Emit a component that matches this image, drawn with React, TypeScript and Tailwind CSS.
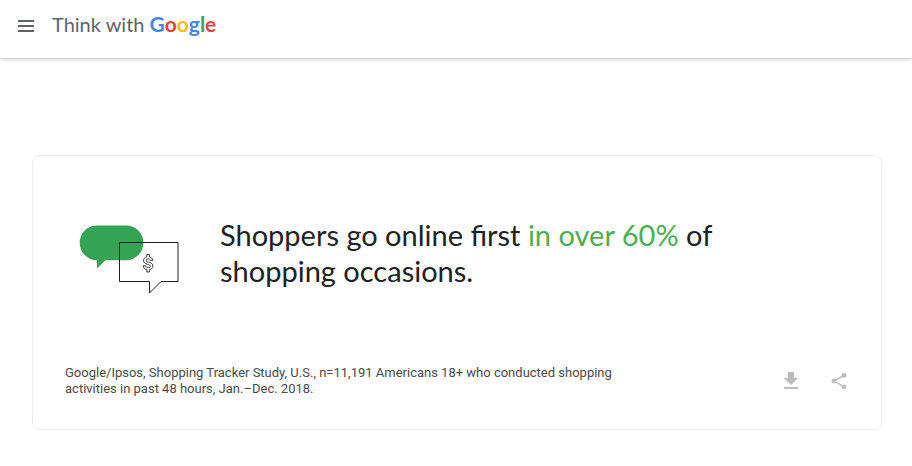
import React from "react";
import { MdFileDownload, MdShare } from "react-icons/md";

function Header() {
  return (
    <header className="flex h-[58px] items-center gap-[18px] bg-white px-[18px] pb-1.5 shadow-[0_1px_4px_rgba(0,0,0,0.25)]">
      <button type="button" aria-label="Open menu" className="text-[#5f6368]">
        <svg width="16" height="12" viewBox="0 0 16 12" fill="currentColor" aria-hidden="true">
          <path d="M0 0h16v2H0zM0 5h16v2H0zM0 10h16v2H0z" />
        </svg>
      </button>
      <a href="#home" className="pb-1 font-['Lato',sans-serif] text-[20px] leading-8 whitespace-nowrap text-[#5f6368]">
        Think with{" "}
        <span className="text-[21px] font-bold">
          <span className="text-[#4285f4]">G</span>
          <span className="text-[#ea4335]">o</span>
          <span className="text-[#fbbc04]">o</span>
          <span className="text-[#4285f4]">g</span>
          <span className="text-[#34a853]">l</span>
          <span className="text-[#ea4335]">e</span>
        </span>
      </a>
    </header>
  );
}

function SpeechBubbles() {
  return (
    <svg className="mt-2 shrink-0" width="100" height="70" viewBox="0 0 100 70" fill="none" aria-hidden="true">
      <path
        d="M18 0.5H47A17.3 17.3 0 0 1 47 35.2H26.5L18 43.5V35.2A17.3 17.3 0 0 1 18 0.5Z"
        fill="#34a353"
      />
      <path d="M40.5 17.5H99V56.5H82L70.5 68V56.5H40.5Z" stroke="#202124" />
      <path
        d="M67.8 29.5h2.6v2.4c2 .4 3.2 1.7 3.4 3.5h-2.6c-.2-1-.9-1.5-2.1-1.5-1.3 0-2 .5-2 1.4 0 1 .9 1.4 2.8 1.9 2.6.7 4 1.8 4 3.9 0 1.9-1.3 3.1-3.5 3.5v2.4h-2.6v-2.4c-2.3-.4-3.6-1.8-3.7-3.8h2.6c.1 1.2 1 1.8 2.5 1.8 1.3 0 2.1-.5 2.1-1.4 0-.9-.8-1.4-2.8-1.9-2.6-.7-4-1.8-4-3.8 0-1.9 1.3-3.2 3.3-3.6z"
        stroke="#202124"
        strokeWidth="0.9"
      />
    </svg>
  );
}

export default function App() {
  return (
    <div className="bg-white">
      <Header />
      <main className="pt-[97px] pr-[30px] pb-9 pl-8">
        <article className="rounded-lg border border-[#ebebeb] px-8 pt-[61px] pb-8">
          <div className="flex gap-[41px] pl-[14px]">
            <SpeechBubbles />
            <h1 className="max-w-[520px] font-['Lato',sans-serif] text-[29px] leading-9 text-[#202124]">
              Shoppers go online first <span className="text-[#4caf50]">in over 60%</span> of
              <br />
              shopping occasions.
            </h1>
          </div>
          <div className="mt-[70px] flex items-center justify-between">
            <p className="max-w-[560px] font-['Roboto',sans-serif] text-[13px] leading-4 text-[#4a4a4a]">
              Google/Ipsos, Shopping Tracker Study, U.S., n=11,191 Americans 18+ who conducted shopping
              <br />
              activities in past 48 hours, Jan.–Dec. 2018.
            </p>
            <div className="flex items-center gap-[26px] text-[#bdbdbd]">
              <button type="button" aria-label="Download">
                <MdFileDownload size={24} />
              </button>
              <button type="button" aria-label="Share">
                <MdShare size={20} />
              </button>
            </div>
          </div>
        </article>
      </main>
    </div>
  );
}
